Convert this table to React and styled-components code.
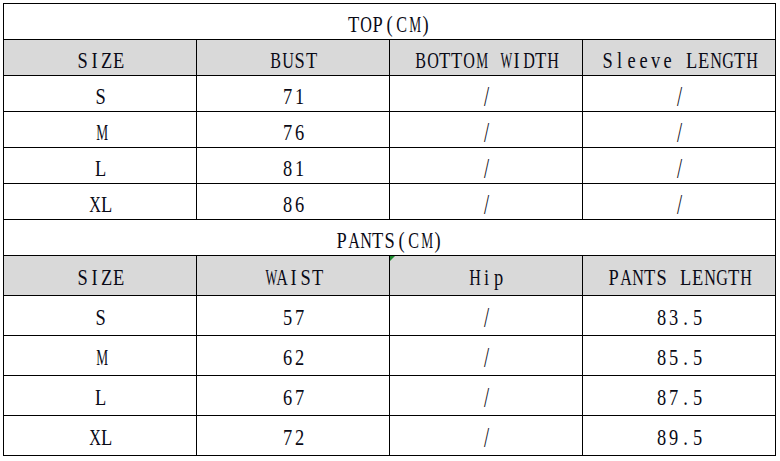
import React from "react";
import styled, { createGlobalStyle } from "styled-components";

const Global = createGlobalStyle`
  html, body { margin: 0; padding: 0; background: #ffffff; }
  body { font-family: "Liberation Serif", "DejaVu Serif", serif; }
`;

const Page = styled.div`
  padding: 3px 0 0 3px;
  width: 780px;
  height: 461px;
  box-sizing: border-box;
  background: #fff;
`;

const Sheet = styled.div`
  display: grid;
  grid-template-columns: repeat(4, 192px);
  grid-template-rows: repeat(7, 35px) repeat(5, 39px);
  gap: 1px;
  padding: 1px;
  background: #000;
  width: max-content;
`;

const Cell = styled.div`
  position: relative;
  display: flex;
  align-items: center;
  justify-content: center;
  padding-top: ${(p) => (p.$tall ? "4px" : "6px")};
  box-sizing: border-box;
  background: ${(p) => (p.$head ? "#d9d9d9" : "#ffffff")};
  grid-column: ${(p) => (p.$span ? "1 / -1" : "auto")};
  color: #0a0a16;
  font-size: 23px;
`;

const Word = styled.span`
  display: inline-flex;
  line-height: 1;
  white-space: pre;
`;

/* each glyph sits in a 12px cell like a monospaced SimSun face */
const Glyph = styled.span`
  display: inline-block;
  width: 15px;
  margin: 0 -1.5px;
  text-align: center;
  transform: ${(p) => p.$tf};
`;

const Marker = styled.span`
  position: absolute;
  left: 0;
  top: 0;
  width: 0;
  height: 0;
  border-top: 5px solid #1c8a2e;
  border-right: 5px solid transparent;
`;

const WIDE = "AODGHNUCBXKRV";

const shapeOf = (c) => {
  if (c === "/") return "scale(0.8, 1.3)";
  if (c === "W") return "scaleX(0.54)";
  if (c === "M") return "scaleX(0.58)";
  if (WIDE.includes(c)) return "scaleX(0.7)";
  return "scaleX(0.8)";
};

const Mono = ({ v }) => (
  <Word>
    {Array.from(v).map((c, i) => (
      <Glyph key={i} $tf={shapeOf(c)}>
        {c}
      </Glyph>
    ))}
  </Word>
);

const topHead = ["SIZE", "BUST", "BOTTOM WIDTH", "Sleeve LENGTH"];
const topRows = [
  ["S", "71", "/", "/"],
  ["M", "76", "/", "/"],
  ["L", "81", "/", "/"],
  ["XL", "86", "/", "/"],
];
const pantsHead = ["SIZE", "WAIST", "Hip", "PANTS LENGTH"];
const pantsRows = [
  ["S", "57", "/", "83.5"],
  ["M", "62", "/", "85.5"],
  ["L", "67", "/", "87.5"],
  ["XL", "72", "/", "89.5"],
];

export default function App() {
  return (
    <Page>
      <Global />
      <Sheet>
        <Cell $span>
          <Mono v="TOP(CM)" />
        </Cell>
        {topHead.map((h) => (
          <Cell key={"th" + h} $head>
            <Mono v={h} />
          </Cell>
        ))}
        {topRows.map((r, i) =>
          r.map((v, j) => (
            <Cell key={"t" + i + j}>
              <Mono v={v} />
            </Cell>
          ))
        )}
        <Cell $span>
          <Mono v="PANTS(CM)" />
        </Cell>
        {pantsHead.map((h, j) => (
          <Cell key={"ph" + h} $head $tall>
            {j === 2 && <Marker />}
            <Mono v={h} />
          </Cell>
        ))}
        {pantsRows.map((r, i) =>
          r.map((v, j) => (
            <Cell key={"p" + i + j} $tall>
              <Mono v={v} />
            </Cell>
          ))
        )}
      </Sheet>
    </Page>
  );
}
